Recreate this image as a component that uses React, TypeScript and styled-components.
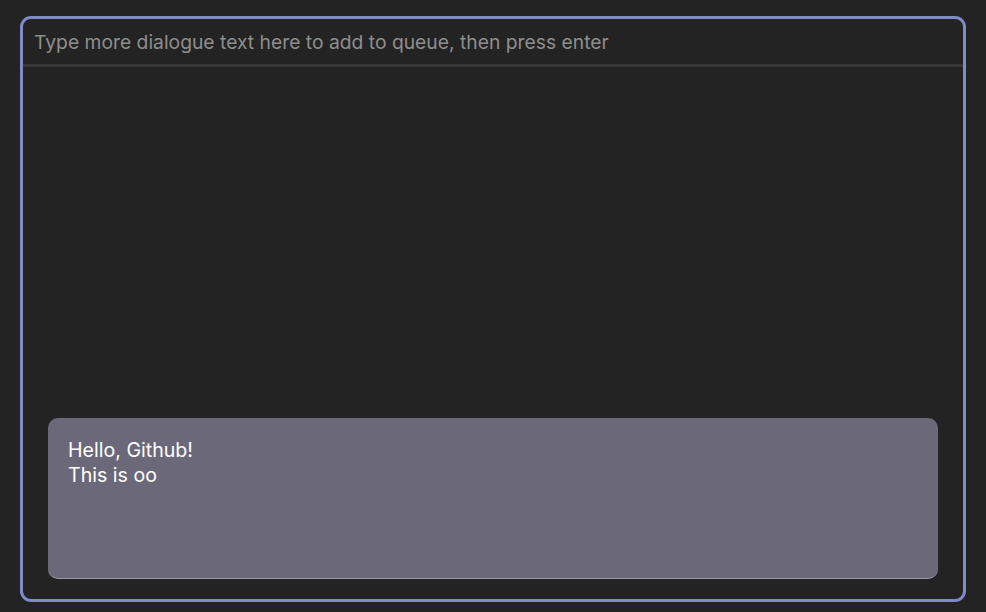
import styled, { createGlobalStyle } from "styled-components";

const GlobalStyle = createGlobalStyle`
  html, body {
    margin: 0;
    padding: 0;
    background: #232323;
    font-family: Inter, "Noto Sans", sans-serif;
  }
  * {
    box-sizing: border-box;
  }
`;

const lines = ["Hello, Github!", "This is oo"];

function App() {
  return (
    <>
      <GlobalStyle />
      <Page>
        <Frame>
          <QueueInput placeholder="Type more dialogue text here to add to queue, then press enter" />
          <Stage>
            <DialogueBox>
              {lines.map((line) => (
                <Line key={line}>{line}</Line>
              ))}
            </DialogueBox>
          </Stage>
        </Frame>
      </Page>
    </>
  );
}

const Page = styled.div`
  width: 986px;
  height: 612px;
  padding: 16px 20px 10px 20px;
`;

const Frame = styled.div`
  width: 946px;
  height: 586px;
  border: 3px solid #7f8ac9;
  border-radius: 11px;
  background: #232323;
  display: flex;
  flex-direction: column;
  overflow: hidden;
`;

const QueueInput = styled.input`
  height: 48px;
  flex: none;
  background: transparent;
  border: none;
  border-bottom: 3px solid #363636;
  outline: none;
  padding: 0 11px 0 11px;
  font-family: Inter, "Noto Sans", sans-serif;
  font-size: 19.3px;
  color: #e0e0e0;

  &::placeholder {
    color: #8e8e8e;
  }
`;

const Stage = styled.div`
  flex: 1;
  display: flex;
  flex-direction: column;
  justify-content: flex-end;
  padding: 0 25px 20px 25px;
`;

const DialogueBox = styled.div`
  height: 161px;
  background: #6b6979;
  border-radius: 10px;
  border-bottom: 1px solid #9a98a4;
  padding: 20px 20px;
  color: #ffffff;
  font-size: 19.6px;
  line-height: 24.5px;
`;

const Line = styled.div``;

export default App;
